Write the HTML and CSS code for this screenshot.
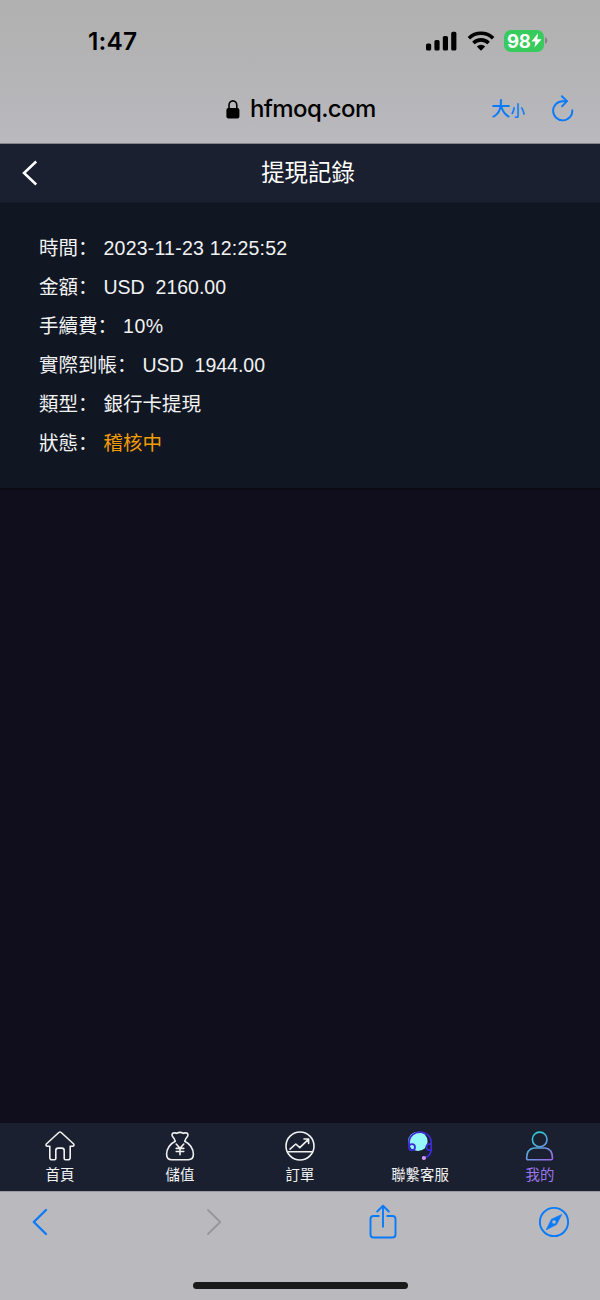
FILE: index.html
```html
<!DOCTYPE html>
<html lang="zh-Hant">
<head>
<meta charset="utf-8">
<title>提現記錄</title>
<link rel="stylesheet" href="styles.css">
</head>
<body>
<div class="phone">
  <header class="browser-top">
    <div class="status">
      <span class="time">1:47</span>
      <div class="indicators">
        <svg class="signal" width="31" height="20" viewBox="0 0 31 20"><rect x="0" y="12.5" width="5.2" height="7" rx="1.6"/><rect x="8.4" y="9" width="5.2" height="10.5" rx="1.6"/><rect x="16.8" y="5" width="5.2" height="14.5" rx="1.6"/><rect x="25.2" y="0.8" width="5.2" height="18.7" rx="1.6"/></svg>
        <svg class="wifi" width="28" height="20" viewBox="0 0 28 20"><g fill="none" stroke="#000" stroke-width="3.6"><path d="M1.9 7.3a17.2 17.2 0 0 1 24.2 0"/><path d="M6.4 12a10.8 10.8 0 0 1 15.2 0"/></g><path d="M9.8 15.5a6 6 0 0 1 8.4 0L14 19.7z"/></svg>
        <div class="battery"><span>98</span><svg width="11" height="15" viewBox="0 0 11 15"><path d="M7 .3.5 8.4h4L3.4 14.6 10.6 6.3H6.3z" fill="#fff"/></svg></div>
        <svg class="cap" width="3" height="7" viewBox="0 0 3 7"><path d="M0 0q2.4 1 2.4 3.5T0 7z" fill="#858588"/></svg>
      </div>
    </div>
    <div class="address">
      <div class="site">
        <svg width="14" height="19" viewBox="0 0 14 19"><rect x="0.4" y="8" width="13" height="10.6" rx="2"/><path d="M3 9V5.2a3.9 4.3 0 0 1 7.8 0V9" fill="none" stroke="#000" stroke-width="1.6"/></svg>
        <span>hfmoq.com</span>
      </div>
      <div class="size"><span class="big">大</span><span class="small">小</span></div>
      <svg class="reload" width="24" height="28" viewBox="0 0 24 28" fill="none" stroke="#087bfa" stroke-width="1.9" stroke-linecap="round" stroke-linejoin="round"><path d="M21.3 15.2A9.6 9.6 0 1 1 11.7 6.2h4"/><path d="M10.9 1.2l5.1 5-5 5.1"/></svg>
    </div>
  </header>

  <nav class="titlebar">
    <svg class="back" width="16" height="26" viewBox="0 0 16 26"><path d="M14.2 1.5 2 13l12.2 11.5" fill="none" stroke="#fff" stroke-width="2.5"/></svg>
    <h1>提現記錄</h1>
  </nav>

  <main>
    <dl class="record">
      <div><dt>時間<i lang="zh-Hans">：</i></dt><dd class="date">2023-11-23 12:25:52</dd></div>
      <div><dt>金額<i lang="zh-Hans">：</i></dt><dd>USD&nbsp; 2160.00</dd></div>
      <div><dt>手續費<i lang="zh-Hans">：</i></dt><dd class="rate">10%</dd></div>
      <div><dt>實際到帳<i lang="zh-Hans">：</i></dt><dd>USD&nbsp; 1944.00</dd></div>
      <div><dt>類型<i lang="zh-Hans">：</i></dt><dd>銀行卡提現</dd></div>
      <div><dt>狀態<i lang="zh-Hans">：</i></dt><dd class="pending">稽核中</dd></div>
    </dl>
  </main>

  <nav class="tabs">
    <a><svg width="30" height="30" viewBox="0 0 30 30" class="line"><path d="M13.8 1.5q1.2-1 2.4 0L28.7 13q.8 2.3-1.2 2.3h-2.3v11.2q0 2.3-2.3 2.3h-2.4q-1.3 0-1.3-1.3v-8q0-2.4-2.4-2.4h-3.6q-2.4 0-2.4 2.4v8q0 1.3-1.3 1.3H7.1q-2.3 0-2.3-2.3V15.3H2.5q-2 0-1.2-2.3z"/></svg><span>首頁</span></a>
    <a><svg width="30" height="30" viewBox="0 0 30 30" class="line"><path d="M10.3 10.2Q9.4 7.4 7.4 5.2 6.2 2 9.3 1.9q1.4-.2 2.4.5Q15 .4 18.3 2.4q1-.7 2.4-.5 3.1.1 1.9 3.3-2 2.2-2.9 5c5 2.3 8.7 7.6 8.7 13.1q0 5.4-5 5.4H6.6q-5 0-5-5.4c0-5.5 3.7-10.8 8.7-13.1zM11.2 13l3.8 4.2 3.8-4.2M15 17.2v6.6M11.2 17.4h7.6M11.2 20.5h7.6"/></svg><span>儲值</span></a>
    <a><svg width="30" height="30" viewBox="0 0 30 30" class="line"><circle cx="15" cy="15" r="14"/><path d="M3.2 20.8h23.6M5 18.2l5.8-5.2 4 3.6 8.6-8.3M19 8h4.6v4.5"/></svg><span>訂單</span></a>
    <a><svg width="30" height="30" viewBox="0 0 30 30"><circle cx="12.9" cy="10.4" r="9.7" fill="#96f8fb"/><g fill="none" stroke="#3d2bd6" stroke-width="1.8"><path d="M4 14.5V12C4-2.5 26.2-2.5 26.2 12v6q0 6.5-6 8.5"/><circle cx="7" cy="16.2" r="3"/><path d="M26 12.8c-6.2 0-6.2 6.6 0 6.6"/></g><circle cx="18.9" cy="27" r="2.1" fill="#d29af3"/></svg><span>聯繫客服</span></a>
    <a class="active"><svg width="30" height="30" viewBox="0 0 30 30"><defs><linearGradient id="mine" gradientUnits="userSpaceOnUse" x1="5" y1="3" x2="25" y2="29"><stop stop-color="#20d6ce"/><stop offset="1" stop-color="#9c69ed"/></linearGradient></defs><g fill="none" stroke="url(#mine)" stroke-width="1.6"><circle cx="14.7" cy="8.4" r="7.3"/><path d="M9 17h11.2q7.3 1 7.3 10.2 0 1.6-1.6 1.6H3.2q-1.6 0-1.6-1.6Q1.7 18 9 17z"/></g></svg><span>我的</span></a>
  </nav>

  <footer class="browser-bottom">
    <div class="tools">
      <svg width="16" height="28" viewBox="0 0 16 28"><path d="M14 2 1.8 14 14 26" fill="none" stroke="#087bfa" stroke-width="2.3" stroke-linecap="round" stroke-linejoin="round"/></svg>
      <svg class="forward" width="16" height="28" viewBox="0 0 16 28"><path d="M2 2l12.2 12L2 26" fill="none" stroke="#97979b" stroke-width="1.9" stroke-linecap="round" stroke-linejoin="round"/></svg>
      <svg class="share" width="28" height="36" viewBox="0 0 28 36"><path d="M9.8 12H4.6Q1.5 12 1.5 15.1v15.3q0 3.1 3.1 3.1h18.8q3.1 0 3.1-3.1V15.1q0-3.1-3.1-3.1h-5.2M14 22.8V2M8.2 7.5 14 1.8l5.8 5.7" fill="none" stroke="#087bfa" stroke-width="1.9" stroke-linecap="round" stroke-linejoin="round"/></svg>
      <svg class="compass" width="32" height="32" viewBox="0 0 32 32"><circle cx="16" cy="16" r="14.1" fill="none" stroke="#087bfa" stroke-width="1.9"/><path fill-rule="evenodd" d="M23.8 8.4 18.6 18.5 8.1 23.9l5.3-10.6zM16 13.9a2.1 2.1 0 1 0 0 4.2 2.1 2.1 0 0 0 0-4.2z" fill="#087bfa" stroke="#087bfa" stroke-width=".6" stroke-linejoin="round"/></svg>
    </div>
    <div class="home-indicator"></div>
  </footer>
</div>
</body>
</html>
```
FILE: styles.css
```css
* { box-sizing: border-box; }
body { margin: 0; background: #100d1c; }
svg { display: block; flex: none; }

.phone {
  width: 600px;
  height: 1300px;
  display: flex;
  flex-direction: column;
  font-family: "Liberation Sans", "Noto Sans CJK TC", sans-serif;
  color: #f1f2f4;
}

.browser-top {
  height: 144px;
  color: #000;
  background: linear-gradient(#b1b1b1, #b4b4b6 50%, #bab9be);
  border-bottom: 1px solid #85858c;
}
.status {
  height: 81px;
  padding: 0 52px 0 88px;
  display: flex;
  justify-content: space-between;
  align-items: center;
}
.time { font: 600 24.5px/30px Inter, sans-serif; letter-spacing: .2px; padding-top: 1px; }
.indicators { display: flex; align-items: center; }
.wifi { margin-left: 10px; }
.battery {
  width: 40px;
  height: 22px;
  margin-left: 9px;
  padding-left: 3px;
  display: flex;
  align-items: center;
  border-radius: 7px;
  background: #36cb5c;
  color: #fff;
  font: 700 18.5px/22px Inter, sans-serif;
  letter-spacing: -.2px;
}
.cap { margin-left: 1px; }

.address {
  height: 56px;
  padding-right: 25px;
  display: grid;
  grid-template-columns: 226px 1fr auto auto;
  align-items: center;
}
.site {
  grid-column: 2;
  display: flex;
  align-items: center;
  gap: 10px;
  font: 500 24px/30px Inter, sans-serif;
  letter-spacing: -.6px;
}
.size {
  margin-right: 26px;
  color: #087bfa;
  font-family: "Noto Sans CJK TC", sans-serif;
  font-weight: 500;
  line-height: 28px;
}
.big { font-size: 19.5px; }
.small { font-size: 14.5px; }

.titlebar {
  height: 58px;
  padding: 0 22px;
  display: grid;
  grid-template-columns: 16px 1fr;
  align-items: center;
  background: #1a202f;
}
.titlebar h1 {
  margin: 0 0 4px;
  text-align: center;
  font: 400 23.4px/34px "Noto Sans CJK TC", sans-serif;
  color: #fff;
}

main { flex: 1; background: #100d1c; }
.record {
  height: 288px;
  margin: 0;
  padding: 27px 39px 0;
  background: #111722;
  border-top: 1px solid #151b27;
  border-bottom: 2px solid #0b0b14;
  font-size: 19.5px;
}
.record div { display: flex; height: 39px; align-items: baseline; }
.record dt { margin-right: 6px; line-height: 37px; }
.record i { font-family: "Noto Sans CJK SC", sans-serif; font-style: normal; line-height: 1; }
.record dd { margin: 0; white-space: pre; line-height: 37px; }
.record .date { letter-spacing: .22px; }
.record .rate { letter-spacing: .5px; }
.record .pending { color: #f39c06; }

.tabs {
  height: 68px;
  padding-top: 8px;
  display: grid;
  grid-template-columns: repeat(5, 1fr);
  background: #1a202f;
}
.tabs a { display: flex; flex-direction: column; align-items: center; }
.tabs span { font-size: 14.4px; line-height: 20px; margin-top: 4px; }
.tabs .active { color: #9b76ed; }
.line { fill: none; stroke: #f1f1f1; stroke-width: 1.6; stroke-linejoin: round; stroke-linecap: round; }

.browser-bottom {
  height: 109px;
  background: #bab9be;
  border-top: 1px solid #9a99a0;
}
.tools {
  height: 60px;
  padding: 0 30px 0 32px;
  display: flex;
  align-items: center;
}
.forward { margin-left: 158px; }
.share { margin-left: 147px; }
.compass { margin-left: auto; }
.home-indicator {
  width: 215px;
  height: 7px;
  margin: 30px auto 0;
  border-radius: 4px;
  background: #1a1a1b;
}
```
